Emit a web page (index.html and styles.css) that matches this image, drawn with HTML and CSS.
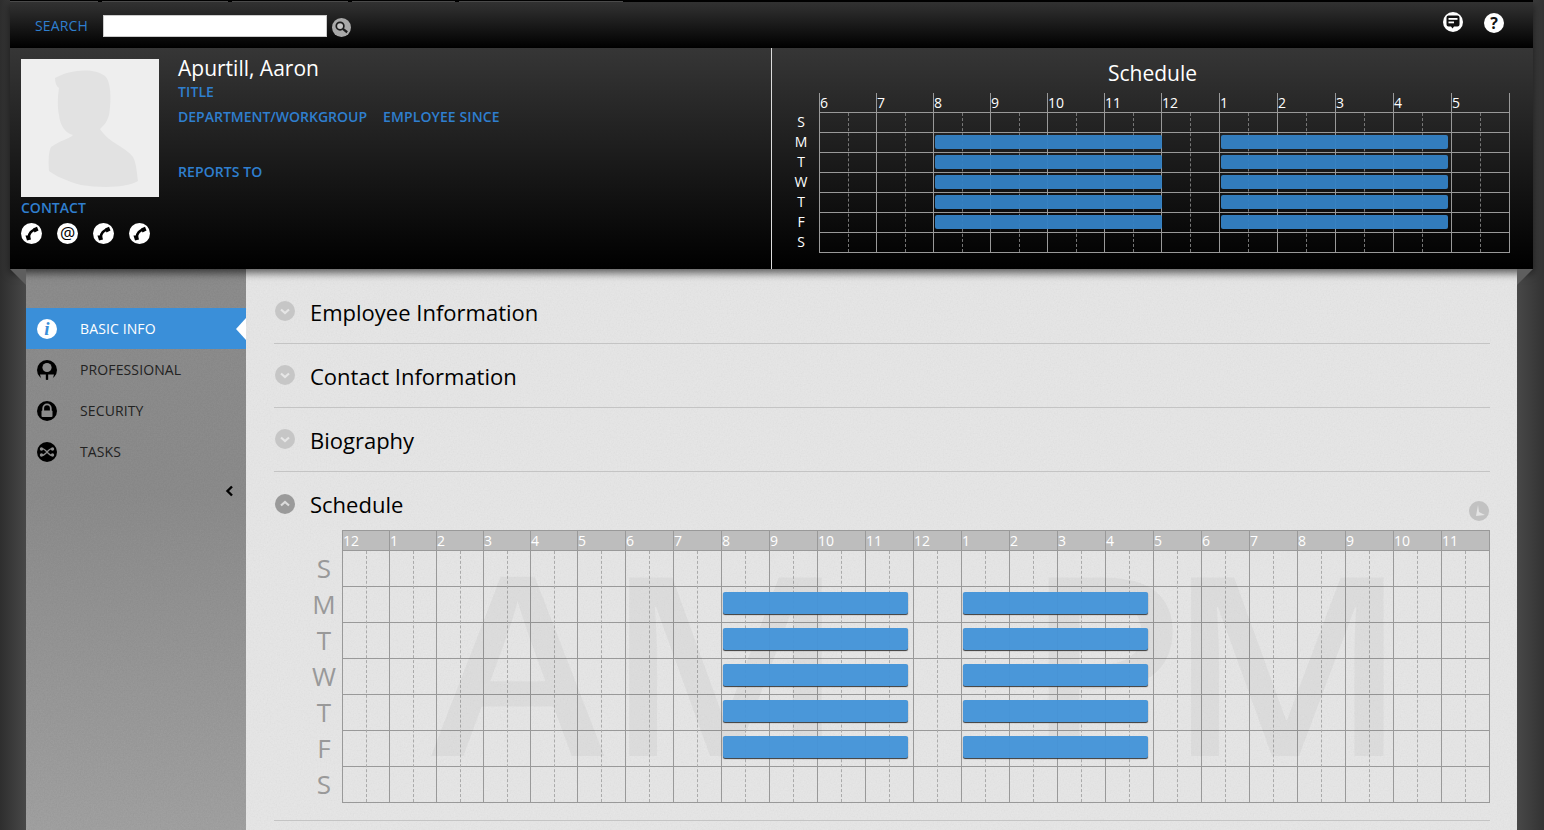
FILE: index.html
```html
<!DOCTYPE html>
<html>
<head>
	<title>Employee profile</title>
	<meta charset="utf-8" />
	<link rel="stylesheet" href="styles.css">
</head>
<body>

<div class="shell">

	<div class="topbar">
		<div class="tabs"><span></span><span></span><span></span><span></span><span></span></div>
		<label class="search-label">SEARCH</label>
		<input class="search-input" type="text" />
		<svg class="search-btn" viewBox="0 0 20 20"><circle cx="10" cy="10" r="10" fill="#a9a9a9"/><circle cx="8.5" cy="8.5" r="4" fill="#c4c4c4" stroke="#1c1c1c" stroke-width="1.8"/><path d="M11.5 11.5 L16 15" stroke="#1c1c1c" stroke-width="2.4"/></svg>
		<div class="top-icons">
			<svg class="top-icon" viewBox="0 0 20 20"><circle cx="10" cy="10" r="10" fill="#fff"/><path d="M5.5 3.5 H14.5 Q16.5 3.5 16.5 5.5 V12.5 Q16.5 14.5 14.5 14.5 H11 L9.5 16.5 L8 14.5 H5.5 Q3.5 14.5 3.5 12.5 V5.5 Q3.5 3.5 5.5 3.5 Z" fill="#111"/><rect x="5.5" y="6" width="9" height="1.8" fill="#fff"/><rect x="5.5" y="9.5" width="5.5" height="1.8" fill="#fff"/></svg>
			<span class="help-icon">?</span>
		</div>
	</div>

	<div class="hero">
		<div class="hero-left">
			<div class="photo-col">
				<svg class="photo" viewBox="0 0 138 138"><rect width="138" height="138" fill="#eeeeee"/><path class="silhouette" d="M34 19 C48 11 72 8 84 17 C91 24 90 44 88 56 C86 64 81 68 79 70 C88 84 105 88 112 98 C116 105 116 118 117 122 C105 129 80 129 60 126 C45 122 33 116 28 112 C27 100 28 92 30 88 C38 82 48 80 52 76 C44 74 39 66 38 56 C36 46 37 36 38 29 C35 27 34 23 34 19 Z"/></svg>
				<div class="blue contact-label">CONTACT</div>
				<div class="contact-icons">
					<svg class="contact-icon" viewBox="0 0 21 21"><use href="#phone"/></svg>
					<span class="at-icon">@</span>
					<svg class="contact-icon" viewBox="0 0 21 21"><use href="#phone"/></svg>
					<svg class="contact-icon" viewBox="0 0 21 21"><use href="#phone"/></svg>
				</div>
			</div>
			<div class="info-col">
				<h1 class="name">Apurtill, Aaron</h1>
				<div class="blue title-line">TITLE</div>
				<div class="blue dept-line"><span>DEPARTMENT/WORKGROUP</span><span>EMPLOYEE SINCE</span></div>
				<div class="blue reports-line">REPORTS TO</div>
			</div>
		</div>

		<div class="hero-right">
			<h2 class="mini-title">Schedule</h2>
			<div class="mini-sched">
				<div class="mini-days"><span>S</span><span>M</span><span>T</span><span>W</span><span>T</span><span>F</span><span>S</span></div>
				<div class="mini-grid">
					<div class="mini-hours">
						<div class="mh">6</div><div class="mh">7</div><div class="mh">8</div><div class="mh">9</div><div class="mh">10</div><div class="mh">11</div>
						<div class="mh">12</div><div class="mh">1</div><div class="mh">2</div><div class="mh">3</div><div class="mh">4</div><div class="mh">5</div>
					</div>
					<div class="mini-bars">
						<div class="mb am r2"></div><div class="mb pm r2"></div>
						<div class="mb am r3"></div><div class="mb pm r3"></div>
						<div class="mb am r4"></div><div class="mb pm r4"></div>
						<div class="mb am r5"></div><div class="mb pm r5"></div>
						<div class="mb am r6"></div><div class="mb pm r6"></div>
					</div>
				</div>
			</div>
		</div>
	</div>

	<span class="fold fold-left"></span>
	<span class="fold fold-right"></span>
</div>

<div class="main">
	<ul class="sidenav">
		<li class="active">
			<span class="info-icon">i</span>BASIC INFO
		</li>
		<li>
			<svg class="nav-icon" viewBox="0 0 20 20"><circle cx="10" cy="10" r="10" fill="#000"/><circle cx="10" cy="7.5" r="4.6" fill="#8c8c8c"/><path d="M3 14.5 H8.8 V20 H5 Q3.5 17 3 14.5 Z" fill="#8c8c8c"/><path d="M17 14.5 H11.2 V20 H15 Q16.5 17 17 14.5 Z" fill="#8c8c8c"/></svg>PROFESSIONAL
		</li>
		<li>
			<svg class="nav-icon" viewBox="0 0 20 20"><circle cx="10" cy="10" r="10" fill="#000"/><path d="M6.2 10 V7.2 A3.8 3.8 0 0 1 13.8 7.2 V10" fill="none" stroke="#8c8c8c" stroke-width="1.8"/><rect x="4.5" y="9.5" width="11" height="6.5" rx="1" fill="#8c8c8c"/></svg>SECURITY
		</li>
		<li>
			<svg class="nav-icon" viewBox="0 0 20 20"><circle cx="10" cy="10" r="10" fill="#000"/><path d="M4 7 C8 4 12 16 16 13 M4 13 C8 16 12 4 16 7" fill="none" stroke="#8c8c8c" stroke-width="1.4"/><circle cx="4.5" cy="7" r="1.7" fill="#8c8c8c"/><circle cx="4.5" cy="13" r="1.7" fill="#8c8c8c"/><circle cx="15.5" cy="7" r="1.7" fill="#8c8c8c"/><circle cx="15.5" cy="13" r="1.7" fill="#8c8c8c"/></svg>TASKS
		</li>
		<li class="collapse">
			<svg class="collapse-icon" viewBox="0 0 9 12"><path d="M7 1.5 L2.5 6 L7 10.5" fill="none" stroke="#000" stroke-width="2.4"/></svg>
		</li>
	</ul>

	<div class="content">
		<div class="section">
			<svg class="toggle" viewBox="0 0 20 20"><circle cx="10" cy="10" r="10" fill="#c6c6c6"/><path d="M6 8.5 L10 12 L14 8.5" fill="none" stroke="#e6e6e6" stroke-width="2.2"/></svg>
			<h3>Employee Information</h3>
		</div>
		<div class="section">
			<svg class="toggle" viewBox="0 0 20 20"><circle cx="10" cy="10" r="10" fill="#c6c6c6"/><path d="M6 8.5 L10 12 L14 8.5" fill="none" stroke="#e6e6e6" stroke-width="2.2"/></svg>
			<h3>Contact Information</h3>
		</div>
		<div class="section">
			<svg class="toggle" viewBox="0 0 20 20"><circle cx="10" cy="10" r="10" fill="#c6c6c6"/><path d="M6 8.5 L10 12 L14 8.5" fill="none" stroke="#e6e6e6" stroke-width="2.2"/></svg>
			<h3>Biography</h3>
		</div>
		<div class="section open">
			<div class="section-head">
				<svg class="toggle" viewBox="0 0 20 20"><circle cx="10" cy="10" r="10" fill="#9a9a9a"/><path d="M6 11.5 L10 8 L14 11.5" fill="none" stroke="#dcdcdc" stroke-width="2.2"/></svg>
				<h3>Schedule</h3>
				<svg class="sched-tool" viewBox="0 0 20 20"><circle cx="10" cy="10" r="10" fill="#c2c2c2"/><path d="M9 4 L10 11 L16 14 L7 15 Z" fill="#e4e4e4"/></svg>
			</div>
			<div class="sched">
				<div class="days"><span>S</span><span>M</span><span>T</span><span>W</span><span>T</span><span>F</span><span>S</span></div>
				<div class="sched-grid">
					<div class="hours">
						<div class="hr">12</div><div class="hr">1</div><div class="hr">2</div><div class="hr">3</div><div class="hr">4</div><div class="hr">5</div>
						<div class="hr">6</div><div class="hr">7</div><div class="hr">8</div><div class="hr">9</div><div class="hr">10</div><div class="hr">11</div>
						<div class="hr">12</div><div class="hr">1</div><div class="hr">2</div><div class="hr">3</div><div class="hr">4</div><div class="hr">5</div>
						<div class="hr">6</div><div class="hr">7</div><div class="hr">8</div><div class="hr">9</div><div class="hr">10</div><div class="hr">11</div>
					</div>
					<div class="watermark"><span>AM</span><span>PM</span></div>
					<div class="bars">
						<div class="bar am r2"></div><div class="bar pm r2"></div>
						<div class="bar am r3"></div><div class="bar pm r3"></div>
						<div class="bar am r4"></div><div class="bar pm r4"></div>
						<div class="bar am r5"></div><div class="bar pm r5"></div>
						<div class="bar am r6"></div><div class="bar pm r6"></div>
					</div>
				</div>
			</div>
		</div>
	</div>
</div>

<svg class="defs" width="0" height="0">
	<symbol id="phone" viewBox="0 0 21 21">
		<circle cx="10.5" cy="10.5" r="10.5" fill="#fff"/>
		<path d="M15 6.5 C11 7 8 10 7.5 15" fill="none" stroke="#000" stroke-width="2.6"/>
		<path d="M12 5.5 L16 3.8 L17.5 7.5 L13.5 9.5 Z" fill="#000"/>
		<path d="M4.5 12.5 L9 12.5 L10 16.5 L6 17.5 Z" fill="#000"/>
	</symbol>
</svg>

</body>
</html>
```

FILE: styles.css
```css
html, body {
	margin: 0;
	height: 830px;
	overflow: hidden;
}

body {
	background: linear-gradient(to right, #2e2e2e 0, #484848 26px, #484848 1517px, #333 100%);
	font-family: "Open Sans", sans-serif;
	font-size: 14px;
}

.blue {
	color: #2f7fcf;
	font-weight: 600;
	letter-spacing: .1px;
}

/* top bar */
.shell {
	position: relative;
	margin: 0 11px 0 10px;
	box-shadow: 0 4px 8px rgba(0, 0, 0, .6);
	z-index: 2;
}

.topbar {
	position: relative;
	height: 48px;
	display: flex;
	align-items: flex-start;
	background: linear-gradient(#333 0, #2a2a2a 10px, #000 100%);
}

.tabs {
	position: absolute;
	top: 0;
	left: 0;
	right: 0;
	height: 2px;
	background: #000;
	display: flex;
}

.tabs span {
	height: 1px;
	margin: 1px 4px 0 0;
	background: #4a4a4a;
}

.tabs span:nth-child(1) { width: 88px; }
.tabs span:nth-child(2) { width: 126px; }
.tabs span:nth-child(3) { width: 116px; }
.tabs span:nth-child(4) { width: 103px; }
.tabs span:nth-child(5) { width: 164px; }

.search-label {
	margin: 16px 0 0 25px;
	width: 68px;
	color: #2f7fcf;
	line-height: 20px;
	letter-spacing: .15px;
}

.search-input {
	width: 224px;
	height: 22px;
	margin: 15px 0 0 0;
	padding: 0;
	box-sizing: border-box;
	border: 1px solid #ccc;
	background: #fff;
}

.search-btn {
	width: 19px;
	height: 19px;
	margin: 18px 0 0 5px;
}

.top-icons {
	margin: 12px 0 0 auto;
	padding-right: 29px;
	display: flex;
	gap: 21px;
}

.top-icon {
	width: 20px;
	height: 20px;
}

.help-icon {
	width: 20px;
	height: 20px;
	margin-top: 1px;
	border-radius: 50%;
	background: #fff;
	color: #111;
	font-weight: 700;
	font-size: 16px;
	line-height: 20px;
	text-align: center;
}

/* hero */
.hero {
	display: flex;
	height: 221px;
	background: linear-gradient(#363636 0, #000 100%);
}

.hero-left {
	width: 762px;
	display: flex;
	box-sizing: border-box;
	padding: 11px 0 0 11px;
	border-right: 1px solid #ddd;
}

.photo-col {
	width: 138px;
}

.photo {
	display: block;
	width: 138px;
	height: 138px;
}

.silhouette {
	fill: #e2e2e2;
	filter: blur(.7px);
}

.contact-label {
	margin-top: 1px;
	line-height: 19px;
	letter-spacing: 0;
}

.contact-icons {
	margin-top: 6px;
	display: flex;
	gap: 15px;
}

.contact-icon {
	width: 21px;
	height: 21px;
}

.at-icon {
	width: 21px;
	height: 21px;
	border-radius: 50%;
	background: #fff;
	color: #000;
	font-size: 17px;
	line-height: 20px;
	text-align: center;
}

.info-col {
	margin: -1px 0 0 19px;
}

.name {
	margin: 0;
	color: #fff;
	font-size: 21px;
	font-weight: 400;
	line-height: 20px;
}

.title-line {
	margin-top: 2px;
	line-height: 24px;
}

.dept-line {
	line-height: 26px;
	display: flex;
	gap: 16px;
}

.dept-line span:first-child {
	letter-spacing: 0;
}

.reports-line {
	margin-top: 29px;
	line-height: 26px;
}

.hero-right {
	flex: 1;
}

.mini-title {
	margin: 12px 0 0;
	color: #fff;
	font-size: 21px;
	font-weight: 400;
	line-height: 26px;
	text-align: center;
}

.mini-sched {
	display: flex;
	margin-top: 7px;
	padding-left: 19px;
}

.mini-days {
	width: 28px;
	padding-top: 19px;
}

.mini-days span {
	display: block;
	height: 20px;
	box-sizing: border-box;
	padding-right: 8px;
	line-height: 20px;
	color: #fff;
	text-align: center;
	font-size: 14px;
}

.mini-grid {
	position: relative;
	width: 691px;
	height: 160px;
}

.mini-hours {
	display: flex;
	height: 160px;
	border-right: 1px solid #999;
	box-sizing: border-box;
	background: repeating-linear-gradient(#999 0, #999 1px, transparent 1px, transparent 20px) 0 19px / 100% 141px no-repeat;
}

.mh {
	position: relative;
	width: 58px;
	box-sizing: border-box;
	border-left: 1px solid #999;
	color: #fff;
	font-size: 14px;
	line-height: 20px;
}

.mh:nth-child(-n+6) {
	width: 57px;
}

.mh::after {
	content: "";
	position: absolute;
	top: 20px;
	bottom: 1px;
	left: 28px;
	border-left: 1px dashed #777;
}

.mini-bars {
	position: absolute;
	top: 20px;
	left: 0;
	right: 0;
	height: 140px;
	display: grid;
	grid-template-rows: repeat(7, 20px);
}

.mb {
	height: 14px;
	margin-top: 2px;
	border-radius: 2px;
	background: #3480c2;
	opacity: .97;
}

.mb.am {
	width: 227px;
	margin-left: 116px;
}

.mb.pm {
	width: 227px;
	margin-left: 402px;
}

.r2 { grid-area: 2 / 1; }
.r3 { grid-area: 3 / 1; }
.r4 { grid-area: 4 / 1; }
.r5 { grid-area: 5 / 1; }
.r6 { grid-area: 6 / 1; }

/* folded corners under the header */
.fold {
	position: absolute;
	top: 100%;
	width: 0;
	height: 0;
	border-top: 16px solid #5e5e5e;
}

.fold-left {
	left: 0;
	border-left: 16px solid transparent;
}

.fold-right {
	right: 0;
	border-right: 16px solid transparent;
}

/* main */
.main {
	display: flex;
	margin: 0 27px 0 26px;
	height: 561px;
}

.sidenav {
	width: 220px;
	margin: 0;
	padding: 39px 0 0;
	list-style: none;
	background:
		url("data:image/svg+xml,%3Csvg xmlns='http://www.w3.org/2000/svg' width='300' height='300'%3E%3Cfilter id='n'%3E%3CfeTurbulence type='fractalNoise' baseFrequency='.7' numOctaves='3'/%3E%3CfeColorMatrix values='0 0 0 0 0 0 0 0 0 0 0 0 0 0 0 0 0 0 .07 0'/%3E%3C/filter%3E%3Crect width='300' height='300' filter='url(%23n)'/%3E%3C/svg%3E"),
		linear-gradient(#8f8f8f, #8e8e8e 40%, #a4a4a4);
	color: #222;
	letter-spacing: .12px;
}

.sidenav li {
	position: relative;
	height: 41px;
	display: flex;
	align-items: center;
	padding-left: 11px;
}

.sidenav li.active {
	background: #3a8fd9;
	color: #fff;
}

.sidenav li.active::after {
	content: "";
	position: absolute;
	right: 0;
	top: 10px;
	border-style: solid;
	border-width: 11px 10px 11px 0;
	border-color: transparent #fff transparent transparent;
}

.nav-icon, .info-icon {
	width: 20px;
	height: 20px;
	margin-right: 23px;
	flex: none;
}

.info-icon {
	border-radius: 50%;
	background: #fff;
	color: #3a8fd9;
	font-family: "Liberation Serif", serif;
	font-style: italic;
	font-weight: 700;
	font-size: 19px;
	line-height: 20px;
	text-align: center;
}

.sidenav li.collapse {
	justify-content: flex-end;
	padding-right: 12px;
}

.collapse-icon {
	width: 9px;
	height: 12px;
	margin-bottom: 3px;
}

.content {
	flex: 1;
	padding: 11px 27px 0 28px;
	background:
		url("data:image/svg+xml,%3Csvg xmlns='http://www.w3.org/2000/svg' width='300' height='300'%3E%3Cfilter id='n'%3E%3CfeTurbulence type='fractalNoise' baseFrequency='.7' numOctaves='3'/%3E%3CfeColorMatrix values='0 0 0 0 0 0 0 0 0 0 0 0 0 0 0 0 0 0 .05 0'/%3E%3C/filter%3E%3Crect width='300' height='300' filter='url(%23n)'/%3E%3C/svg%3E"),
		#e9e9e9;
}

.section {
	height: 63px;
	border-bottom: 1px solid #c4c4c4;
	display: flex;
	align-items: center;
}

.section h3 {
	margin: 0;
	color: #000;
	font-size: 22px;
	font-weight: 400;
	line-height: 28px;
}

.toggle {
	width: 20px;
	height: 20px;
	margin: 0 15px 2px 1px;
	flex: none;
}

.section.open {
	height: 348px;
	display: block;
}

.section-head {
	height: 58px;
	box-sizing: border-box;
	padding-top: 6px;
	display: flex;
	align-items: center;
}

.section-head .toggle {
	margin-bottom: 0;
}

.sched-tool {
	width: 20px;
	height: 20px;
	margin: 13px 1px 0 auto;
}

.sched {
	display: flex;
}

.days {
	width: 68px;
	padding-top: 20px;
}

.days span {
	display: block;
	height: 36px;
	box-sizing: border-box;
	padding-left: 32px;
	line-height: 36px;
	color: #999;
	font-size: 26px;
	text-align: center;
}

.sched-grid {
	position: relative;
	width: 1148px;
	height: 273px;
}

.hours {
	display: flex;
	height: 273px;
	box-sizing: border-box;
	border-top: 1px solid #999;
	border-right: 1px solid #999;
	background:
		linear-gradient(#bdbdbd, #bdbdbd) 0 0 / 100% 19px no-repeat,
		repeating-linear-gradient(#999 0, #999 1px, transparent 1px, transparent 36px) 0 19px;
}

.hr {
	position: relative;
	width: 48px;
	box-sizing: border-box;
	border-left: 1px solid #999;
	color: #fff;
	font-size: 14px;
	line-height: 20px;
}

.hr:nth-child(-n+5) {
	width: 47px;
}

.hr::after {
	content: "";
	position: absolute;
	top: 20px;
	bottom: 1px;
	left: 23px;
	border-left: 1px dashed #aaa;
}

.watermark {
	position: absolute;
	top: 0;
	left: 0;
	right: 0;
	color: rgba(0, 0, 0, .035);
	font-size: 250px;
	font-weight: 600;
	line-height: 258px;
	white-space: nowrap;
}

.watermark span {
	position: absolute;
	top: 0;
	transform: scaleX(1.05);
	transform-origin: left;
}

.watermark span:first-child {
	left: 89px;
}

.watermark span:last-child {
	left: 682px;
	letter-spacing: -18px;
}

.bars {
	position: absolute;
	top: 20px;
	left: 0;
	right: 0;
	height: 252px;
	display: grid;
	grid-template-rows: repeat(7, 36px);
}

.bar {
	height: 22px;
	margin-top: 6px;
	border-radius: 2px;
	background: #4695d9;
	box-shadow: 0 1px 1px #333;
	opacity: .97;
}

.bar.am {
	width: 185px;
	margin-left: 381px;
}

.bar.pm {
	width: 185px;
	margin-left: 621px;
}

.defs {
	position: absolute;
}
```
